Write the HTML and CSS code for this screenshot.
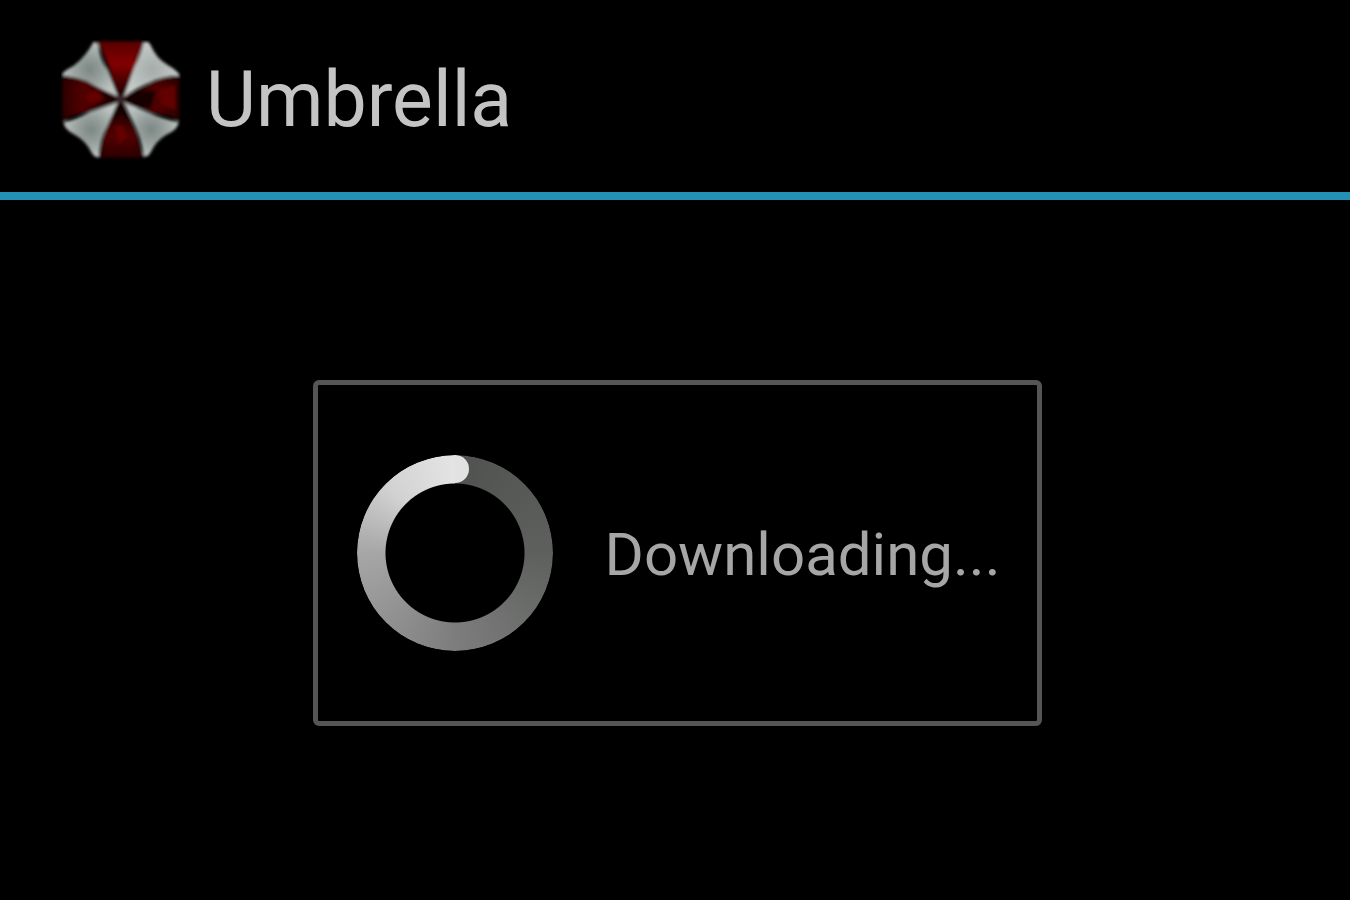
FILE: index.html
```html
<!DOCTYPE html>
<html lang="en">

<head>
    <meta charset="UTF-8">
    <meta name="viewport" content="width=device-width, initial-scale=1.0">
    <title>Umbrella</title>
    <link rel="stylesheet" href="styles.css">
</head>

<body>
    <header class="header">
        <svg class="logo" viewBox="34 30 360 360" aria-hidden="true">
            <defs>
                <radialGradient id="red" gradientUnits="userSpaceOnUse" cx="212" cy="208" r="190">
                    <stop offset="0" stop-color="#160003"/>
                    <stop offset=".3" stop-color="#2e0004"/>
                    <stop offset=".6" stop-color="#520204"/>
                    <stop offset="1" stop-color="#240002"/>
                </radialGradient>
                <linearGradient id="topRed" x1="0" y1="0" x2="0" y2="1">
                    <stop offset="0" stop-color="#580002"/>
                    <stop offset=".4" stop-color="#820002"/>
                    <stop offset=".75" stop-color="#400003"/>
                    <stop offset="1" stop-color="#190003"/>
                </linearGradient>
                <radialGradient id="silver">
                    <stop offset="0" stop-color="#7c8683"/>
                    <stop offset=".5" stop-color="#98a19e"/>
                    <stop offset="1" stop-color="#bcc3c0"/>
                </radialGradient>
                <radialGradient id="light">
                    <stop offset="0" stop-color="#a4aba8"/>
                    <stop offset="1" stop-color="#c5cbc8"/>
                </radialGradient>
                <filter id="soft" x="-10%" y="-10%" width="120%" height="120%">
                    <feGaussianBlur stdDeviation="4"/>
                </filter>
            </defs>
            <g filter="url(#soft)">
                <!-- red panels -->
                <path fill="url(#topRed)" d="M142 34L284 34Q270 66 258 104L220 205L202 202L172 118Q158 66 142 34Z"/>
                <path fill="url(#red)" d="M38 138L84 144Q135 162 204 202L206 214L120 244L64 258L38 275Z"/>
                <path fill="url(#red)" d="M390 138L340 144Q285 168 220 202L220 214L310 248L360 258L389 274Z"/>
                <path fill="url(#red)" d="M206 215L218 215L260 308Q268 350 286 383L144 383Q155 345 168 300Z"/>
                <!-- dark folds around the hub -->
                <path fill="#130002" d="M212 214L244 277L210 248L182 276ZM228 208L254 184L318 182L304 232L252 230Z"/>
                <path fill="#180003" d="M148 36L180 108L202 194L174 136ZM278 42L250 115L224 193L240 140Z"/>
                <path fill="#630206" d="M110 188L142 180L162 206L130 222L108 214ZM330 178L376 166L377 240L334 224ZM194 288L220 286L234 322L208 344Z"/>
                <!-- silver panels -->
                <path fill="url(#silver)" d="M132 35Q145 36 147 49Q150 90 174 122L205 200Q150 177 112 154Q76 141 36 136Q42 122 70 109Q109 79 132 35Z"/>
                <path fill="url(#light)" d="M282 38Q296 30 303 46Q320 86 354 105Q384 122 391 137Q342 136 300 158Q262 172 222 201L254 112Q270 80 282 38Z"/>
                <path fill="url(#silver)" d="M205 216L174 286Q150 330 147 381Q135 384 126 368Q109 332 75 314Q43 298 42 276Q75 272 120 246Z"/>
                <path fill="url(#silver)" d="M222 216L302 250Q338 268 387 276Q384 301 350 314Q318 333 302 369Q291 386 282 376Q276 330 256 288Z"/>
                <circle cx="213" cy="207" r="14" fill="#3b2026"/>
            </g>
        </svg>
        <h1 class="title">Umbrella</h1>
    </header>
    <main class="main">
        <div class="dialog">
            <div class="spinner" role="progressbar" aria-labelledby="message"></div>
            <p class="message" id="message">Downloading...</p>
        </div>
    </main>
</body>

</html>
```

FILE: styles.css
```css
* {
    margin: 0;
    padding: 0;
    box-sizing: border-box;
}

body {
    display: flex;
    flex-direction: column;
    min-height: 100vh;
    background: #000;
    font-family: Roboto, "Liberation Sans", sans-serif;
}

.header {
    display: flex;
    align-items: center;
    gap: 25px;
    padding: 40px 61px 32px;
    border-bottom: 8px solid #2391b3;
}

.logo {
    width: 120px;
    height: 120px;
}

.title {
    font-size: 77px;
    font-weight: 400;
    line-height: 80px;
    color: #c4c4c4;
}

.main {
    flex: 1;
    display: flex;
    align-items: center;
    justify-content: center;
    padding: 5px 0 0 5px;
}

.dialog {
    display: flex;
    align-items: center;
    gap: 52px;
    padding: 70px 37px 70px 39px;
    border: 5px solid #555;
    border-radius: 6px;
}

.spinner {
    position: relative;
    width: 196px;
    height: 196px;
    border-radius: 50%;
    background: conic-gradient(#505250, #5e605e 90deg, #7c7d7c 180deg, #a5a6a5 270deg, #d2d2d2 315deg, #e4e4e4 360deg);
    -webkit-mask: radial-gradient(circle, transparent 69px, #000 70px);
    mask: radial-gradient(circle, transparent 69px, #000 70px);
}

/* round end of the ring */
.spinner::after {
    content: "";
    position: absolute;
    top: 0;
    left: 84px;
    width: 28px;
    height: 28px;
    border-radius: 50%;
    background: linear-gradient(to right, transparent 50%, #e2e2e2 50%);
}

.message {
    padding-top: 4px;
    font-size: 60px;
    line-height: 72px;
    color: #a6a6a6;
}
```
